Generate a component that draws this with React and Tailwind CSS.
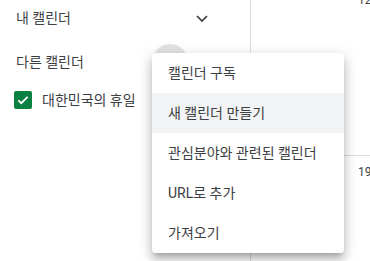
import { useState } from "react";

const font = { fontFamily: "Roboto, 'Noto Sans CJK KR', sans-serif" };

const menuItems = [
    "캘린더 구독",
    "새 캘린더 만들기",
    "관심분야와 관련된 캘린더",
    "URL로 추가",
    "가져오기",
];

const Chevron = () => (
    <svg width="24" height="24" viewBox="0 0 24 24" fill="none">
        <path d="M7 10l5 5 5-5" stroke="#3c4043" strokeWidth="1.7" />
    </svg>
);

const App = () => {
    const [hovered] = useState(1);

    return (
        <div className="relative w-[370px] h-[261px] overflow-hidden bg-white flex text-[#3c4043]" style={font}>
            {/* sidebar */}
            <div className="w-[250px] shrink-0 flex flex-col">
                <div className="h-[36px] flex items-center pl-4 pr-[36px]">
                    <span className="flex-1 text-[14px]">내 캘린더</span>
                    <Chevron />
                </div>
                <div className="h-[36px] mt-2 flex items-center pl-4">
                    <span className="w-[136px] text-[14px] pt-px">다른 캘린더</span>
                    <div className="w-9 h-9 rounded-full bg-[#e3e3e3]"></div>
                </div>
                <div className="h-[40px] flex items-center pl-[14px]">
                    <div className="w-[18px] h-[18px] rounded-[2px] bg-[#0b8043] flex items-center justify-center">
                        <svg width="14" height="14" viewBox="0 0 24 24" fill="none">
                            <path d="M4 12.5l5 5L20 6.5" stroke="white" strokeWidth="3.2" />
                        </svg>
                    </div>
                    <span className="ml-[10px] text-[14px]">대한민국의 휴일</span>
                </div>
            </div>

            {/* month grid */}
            <div className="flex-1 border-l border-[#dadce0] flex flex-col text-[12px]">
                <div className="h-[155px] pl-[107px]">
                    <div className="-mt-[8px] leading-4">12</div>
                </div>
                <div className="border-t border-[#dadce0] pl-[107px] pt-[8px] leading-4">19</div>
            </div>

            {/* dropdown */}
            <div className="absolute left-[152px] top-[53px] w-[192px] bg-white rounded shadow-[0_5px_5px_-3px_rgba(0,0,0,0.2),0_8px_10px_1px_rgba(0,0,0,0.14),0_3px_14px_2px_rgba(0,0,0,0.12)]">
                {menuItems.map((item, i) => (
                    <div
                        key={item}
                        className={`h-10 flex items-center pl-4 text-[14px] ${i === hovered ? "bg-[#f1f3f4]" : ""}`}
                    >
                        {item}
                    </div>
                ))}
            </div>
        </div>
    );
};

export default App;
